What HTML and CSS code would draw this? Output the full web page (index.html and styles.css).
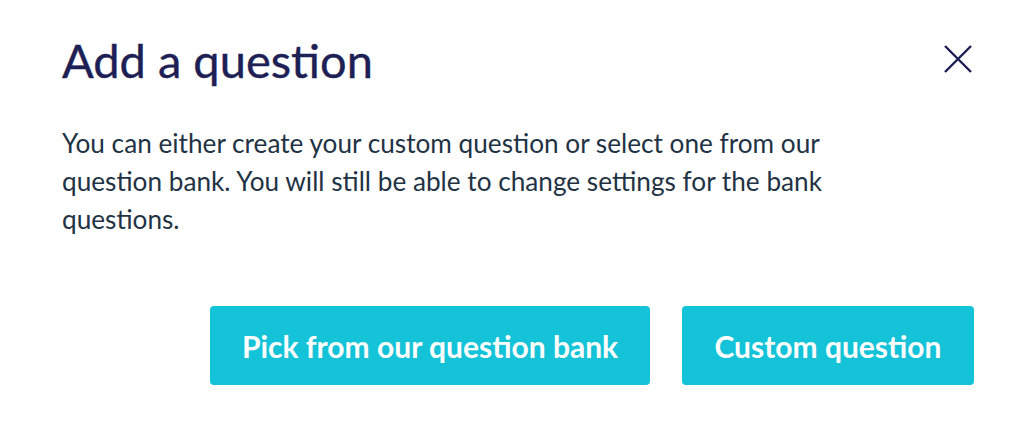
FILE: index.html
```html
<!DOCTYPE html>
<html>
<head>
<meta charset="utf-8">
<link rel="stylesheet" href="styles.css">
</head>
<body>
<div class="modal">
  <div class="header">
    <h1 class="title">Add a question</h1>
    <button class="close" aria-label="Close">
      <svg width="30" height="30" viewBox="0 0 30 30"><path d="M2 2 L28 28 M28 2 L2 28" stroke="#1c1f54" stroke-width="2.4" fill="none"/></svg>
    </button>
  </div>
  <p class="desc">You can either create your custom question or select one from our question bank. You will still be able to change settings for the bank questions.</p>
  <div class="actions">
    <button class="btn btn-wide">Pick from our question bank</button>
    <button class="btn btn-narrow">Custom question</button>
  </div>
</div>
</body>
</html>
```
FILE: styles.css
```css
html, body {
  margin: 0;
  padding: 0;
  background: #ffffff;
}
body {
  font-family: Lato, "Open Sans", sans-serif;
}
.modal {
  padding: 32px 62px 0 62px;
}
.header {
  display: flex;
  justify-content: space-between;
  align-items: flex-start;
}
.title {
  margin: 0;
  font-size: 47px;
  font-weight: 400;
  line-height: 1.2;
  color: #1e1f55;
  -webkit-text-stroke: 0.4px #1e1f55;
}
.close {
  background: none;
  border: 0;
  padding: 0;
  margin-top: 12px;
  margin-right: 1px;
  width: 30px;
  height: 30px;
  cursor: pointer;
}
.close svg { display: block; }
.desc {
  margin: 36px 0 0 0;
  font-size: 26.2px;
  line-height: 38px;
  color: #1f3344;
  max-width: 812px;
}
.actions {
  display: flex;
  justify-content: flex-end;
  gap: 32px;
  margin-top: 68px;
}
.btn {
  height: 79px;
  padding: 0;
  background: #14c3d8;
  color: #ffffff;
  border: 0;
  border-radius: 4px;
  font-family: Lato, "Open Sans", sans-serif;
  font-weight: 700;
  font-size: 30px;
  cursor: pointer;
}
.btn-wide { width: 440px; }
.btn-narrow { width: 292px; }
```
